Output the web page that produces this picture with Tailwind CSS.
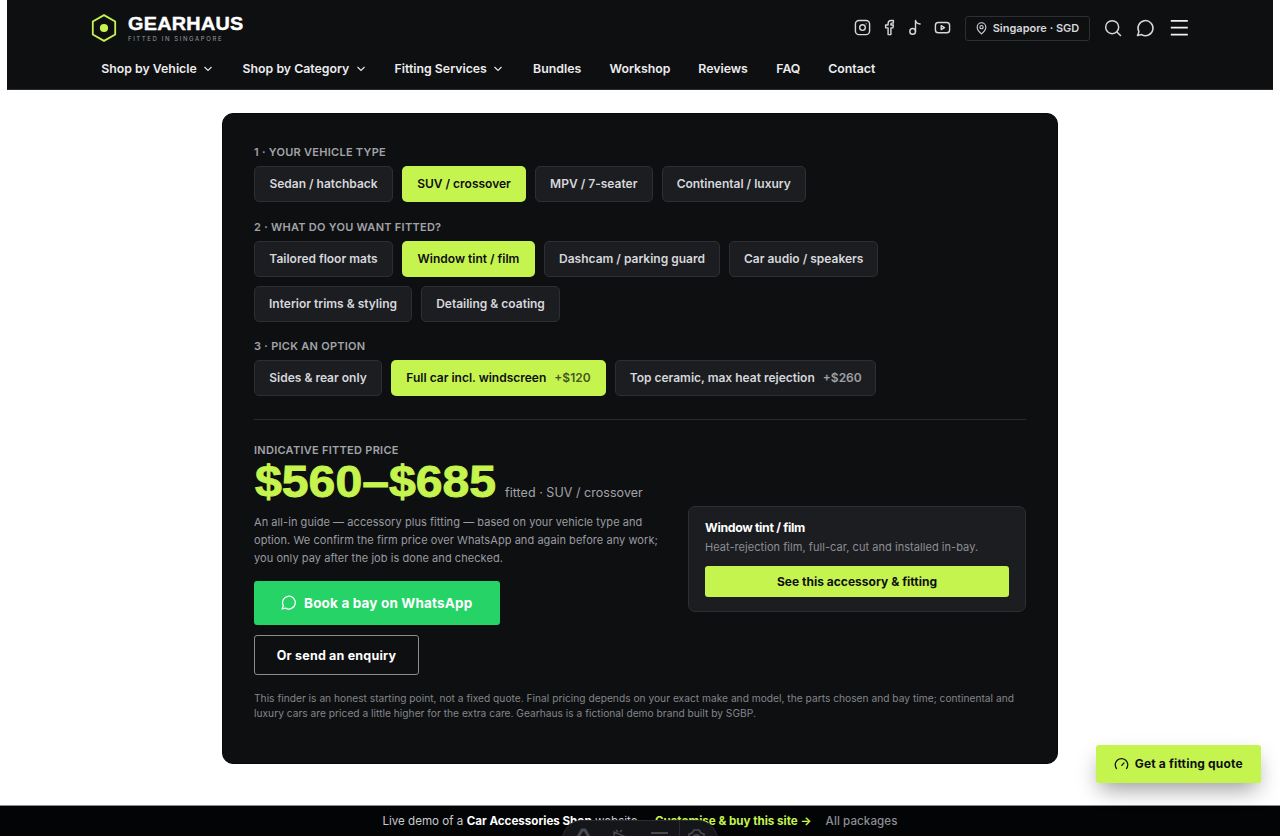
<!DOCTYPE html>
<html lang="en">

<head>
  <meta charset="utf-8" />
  <title>Gearhaus - Fitting price finder</title>
  <script src="https://cdn.jsdelivr.net/npm/@tailwindcss/browser@4"></script>
</head>

<body class="relative h-[836px] overflow-hidden bg-white font-['Inter',sans-serif] text-[12px] text-[#d6d7db]">
  <header class="mx-[7px] h-[90px] border-b border-[#2a2b30] bg-[#0e0f11]">
    <div class="flex h-[56px] items-center justify-between pl-[84px] pr-[83px]">
      <a class="flex items-center gap-[11px]">
        <svg class="h-[29px] w-[26px]" viewBox="0 0 26 29" fill="none">
          <path d="M13 1.100 24.200 7.500v13L13 26.900 1.800 20.500V7.500Z" stroke="#c6f44e" stroke-width="1.800" />
          <circle cx="13" cy="14" r="4.100" fill="#c6f44e" />
        </svg>
        <span class="flex flex-col pt-[1px]">
          <span class="origin-left scale-x-110 font-['Liberation_Sans',sans-serif] text-[18px] leading-[20px] font-bold tracking-[0.250px] text-white [-webkit-text-stroke:0.4px_white]">GEARHAUS</span>
          <span class="mt-[1px] text-[6px] leading-[8px] tracking-[1.600px] text-[#9a9ba1]">FITTED IN SINGAPORE</span>
        </span>
      </a>
      <div class="flex items-center">
        <div class="flex items-center gap-[9.700px] pb-[1px] text-[#d6d7db]">
          <svg class="size-[17px]" viewBox="0 0 24 24" fill="none" stroke="currentColor" stroke-width="2"><rect x="2" y="2" width="20" height="20" rx="5" /><circle cx="12" cy="12" r="4" /><circle cx="17.2" cy="6.8" r=".8" fill="currentColor" stroke="none" /></svg>
          <svg class="size-[17px]" viewBox="0 0 24 24" fill="none" stroke="currentColor" stroke-width="2" stroke-linejoin="round"><path d="M14 8.5V7c0-.8.5-1.2 1.3-1.2H17.500V2h-3.200C11.700 2 10 4 10 6.500v2H6.500v4H10V22h4v-9.500h2.800l.7-4Z" /></svg>
          <svg class="size-[17px]" viewBox="0 0 24 24" fill="none" stroke="currentColor" stroke-width="2" stroke-linecap="round" stroke-linejoin="round"><circle cx="8" cy="17.500" r="4" /><path d="M12 17.500V2c.6 3 2.800 4.800 6.500 5" /></svg>
          <svg class="size-[17px]" viewBox="0 0 24 24" fill="none" stroke="currentColor" stroke-width="2" stroke-linejoin="round"><rect x="2" y="5" width="20" height="14.500" rx="4" /><path d="m10.200 9.500 4.600 2.700-4.600 2.700Z" /></svg>
        </div>
        <div class="ml-[13.500px] flex h-[25px] w-[125px] items-center justify-center gap-[5px] rounded-[3px] border border-[#2e2f34]">
          <svg class="size-[13px]" viewBox="0 0 24 24" fill="none" stroke="currentColor" stroke-width="2"><path d="M12 22s8-7 8-12.500a8 8 0 0 0-16 0C4 15 12 22 12 22Z" /><circle cx="12" cy="9.500" r="3" /></svg>
          <span class="text-[11px] font-semibold">Singapore · SGD</span>
        </div>
        <svg class="ml-[13px] size-[20px]" viewBox="0 0 24 24" fill="none" stroke="currentColor" stroke-width="1.8" stroke-linecap="round"><circle cx="11" cy="11" r="7.800" /><path d="m21 21-4.300-4.300" /></svg>
        <svg class="ml-[12px] size-[20px]" viewBox="0 0 24 24" fill="none" stroke="currentColor" stroke-width="1.8" stroke-linejoin="round"><path d="M3 21l1.700-4.500A9 9 0 1 1 8 19.900Z" /></svg>
        <svg class="ml-[13.500px] h-[20px] w-[22px]" viewBox="0 0 22 20" fill="none" stroke="#f1f1f3" stroke-width="1.700"><path d="M2.800 2.800h17M2.800 9.700h17M2.800 16.600h17" /></svg>
      </div>
    </div>
    <nav class="flex items-center pt-[5px] pl-[94.300px] text-[12.300px] leading-[16px] font-semibold text-[#ececee]">
      <a class="flex w-[141.300px] items-center gap-[5.500px]"><span>Shop by Vehicle</span><svg class="size-[12px]" viewBox="0 0 24 24" fill="none" stroke="currentColor" stroke-width="2.200"><path d="m5 8 7 7 7-7" /></svg></a>
      <a class="flex w-[152px] items-center gap-[5.500px]"><span>Shop by Category</span><svg class="size-[12px]" viewBox="0 0 24 24" fill="none" stroke="currentColor" stroke-width="2.200"><path d="m5 8 7 7 7-7" /></svg></a>
      <a class="flex w-[138.500px] items-center gap-[5.500px]"><span>Fitting Services</span><svg class="size-[12px]" viewBox="0 0 24 24" fill="none" stroke="currentColor" stroke-width="2.200"><path d="m5 8 7 7 7-7" /></svg></a>
      <a class="w-[76.500px]">Bundles</a>
      <a class="w-[88.700px]">Workshop</a>
      <a class="w-[78px]">Reviews</a>
      <a class="w-[52px]">FAQ</a>
      <a>Contact</a>
    </nav>
  </header>

  <main class="mx-auto mt-[23px] h-[651px] w-[836px] rounded-[11px] border border-[#08090a] bg-[#0e0f11] px-[31px] pt-[30px]">
    <h3 class="text-[11px] leading-[16px] font-semibold tracking-[0.270px] text-[#a2a3a9]">1 · YOUR VEHICLE TYPE</h3>
    <div class="mt-[6px] flex gap-[9px] font-semibold">
      <button class="h-[36px] w-[139px] rounded-[5px] border border-[#2e2f34] bg-[#1c1d21]">Sedan / hatchback</button>
      <button class="h-[36px] w-[124px] rounded-[5px] bg-[#c6f44e] text-[#0e0f11]">SUV / crossover</button>
      <button class="h-[36px] w-[117.500px] rounded-[5px] border border-[#2e2f34] bg-[#1c1d21]">MPV / 7-seater</button>
      <button class="h-[36px] w-[144.500px] rounded-[5px] border border-[#2e2f34] bg-[#1c1d21]">Continental / luxury</button>
    </div>

    <h3 class="mt-[17px] text-[11px] leading-[16px] font-semibold tracking-[0.270px] text-[#a2a3a9]">2 · WHAT DO YOU WANT FITTED?</h3>
    <div class="mt-[6px] flex flex-wrap gap-[9px] font-semibold">
      <button class="h-[36px] w-[139px] rounded-[5px] border border-[#2e2f34] bg-[#1c1d21]">Tailored floor mats</button>
      <button class="h-[36px] w-[133px] rounded-[5px] bg-[#c6f44e] text-[#0e0f11]">Window tint / film</button>
      <button class="h-[36px] w-[176px] rounded-[5px] border border-[#2e2f34] bg-[#1c1d21]">Dashcam / parking guard</button>
      <button class="h-[36px] w-[149.400px] rounded-[5px] border border-[#2e2f34] bg-[#1c1d21]">Car audio / speakers</button>
      <button class="h-[36px] w-[158px] rounded-[5px] border border-[#2e2f34] bg-[#1c1d21]">Interior trims &amp; styling</button>
      <button class="h-[36px] w-[139px] rounded-[5px] border border-[#2e2f34] bg-[#1c1d21]">Detailing &amp; coating</button>
    </div>

    <h3 class="mt-[16px] text-[11px] leading-[16px] font-semibold tracking-[0.270px] text-[#a2a3a9]">3 · PICK AN OPTION</h3>
    <div class="mt-[6px] flex gap-[9px] font-semibold">
      <button class="h-[36px] w-[128px] rounded-[5px] border border-[#2e2f34] bg-[#1c1d21]">Sides &amp; rear only</button>
      <button class="h-[36px] w-[215px] rounded-[5px] bg-[#c6f44e] text-[#0e0f11]">Full car incl. windscreen<span class="ml-[8px] opacity-70">+$120</span></button>
      <button class="h-[36px] w-[261.400px] rounded-[5px] border border-[#2e2f34] bg-[#1c1d21]">Top ceramic, max heat rejection<span class="ml-[8px] opacity-70">+$260</span></button>
    </div>

    <section class="mt-[23px] flex items-center justify-between border-t border-[#2a2b30] pt-[22px]">
      <div class="w-[408px]">
        <h3 class="text-[11px] leading-[16px] font-semibold tracking-[0.270px] text-[#a2a3a9]">INDICATIVE FITTED PRICE</h3>
        <div class="flex h-[48px] items-baseline whitespace-nowrap">
          <span class="ml-[1px] w-[241px] origin-left scale-x-110 font-['Liberation_Sans',sans-serif] text-[43.800px] leading-[47px] font-bold text-[#c6f44e] [-webkit-text-stroke:0.9px_#c6f44e]">$560–$685</span>
          <span class="ml-[9px] text-[12.500px] tracking-[0.040px] text-[#a2a3a9]">fitted · SUV / crossover</span>
        </div>
        <p class="mt-[7px] text-[11px] leading-[18px] tracking-[0.060px] whitespace-nowrap text-[#9a9ba1]">
          An all-in guide — accessory plus fitting — based on your vehicle type and<br />
          option. We confirm the firm price over WhatsApp and again before any work;<br />
          you only pay after the job is done and checked.
        </p>
        <button class="mt-[14px] flex h-[43.500px] w-[245.500px] items-center justify-center gap-[7px] rounded-[3px] bg-[#26d367] pr-[1px] text-[13.500px] font-bold tracking-[0.160px] text-white">
          <svg class="size-[17px]" viewBox="0 0 24 24" fill="none" stroke="currentColor" stroke-width="1.8" stroke-linejoin="round"><path d="M3 21l1.700-4.500A9 9 0 1 1 8 19.900Z" /></svg>
          <span>Book a bay on WhatsApp</span>
        </button>
        <button class="mt-[10.500px] h-[40px] w-[165px] rounded-[3px] border border-[#8b8c90] pt-[2px] text-[12.500px] font-bold tracking-[0.200px] text-white">Or send an enquiry</button>
      </div>
      <div class="mt-[1px] h-[106px] w-[338px] rounded-[7px] border border-[#2e2f34] bg-[#1c1d21] px-[16px] pt-[12px]">
        <h4 class="text-[12.300px] leading-[18px] font-bold tracking-[-0.330px] text-white">Window tint / film</h4>
        <p class="mt-[2px] text-[11px] leading-[16px] tracking-[0.050px] text-[#8d8e94]">Heat-rejection film, full-car, cut and installed in-bay.</p>
        <button class="mt-[11px] h-[31px] w-full rounded-[3px] bg-[#c6f44e] text-[12px] font-bold tracking-[0.020px] text-[#0e0f11]">See this accessory &amp; fitting</button>
      </div>
    </section>
    <p class="mt-[15.500px] text-[10.200px] leading-[15px] tracking-[0.015px] whitespace-nowrap text-[#84858b]">
      This finder is an honest starting point, not a fixed quote. Final pricing depends on your exact make and model, the parts chosen and bay time; continental and<br />
      luxury cars are priced a little higher for the extra care. Gearhaus is a fictional demo brand built by SGBP.
    </p>
  </main>

  <footer class="mt-[41px] flex h-[31px] items-center justify-center border-t border-[#8b8c90] bg-[#030406] pt-[2px] text-[11.600px] whitespace-nowrap text-[#c8c9cd]">
    <span>Live demo of a <b class="font-bold text-white">Car Accessories Shop</b> website</span>
    <a class="ml-[17.500px] font-bold text-[#c6f44e]">Customise &amp; buy this site →</a>
    <a class="ml-[14px] font-medium tracking-[0.080px] text-[#8d8e94]">All packages</a>
  </footer>

  <button class="absolute top-[745px] left-[1096px] flex h-[38px] w-[164.500px] items-center justify-center gap-[6px] rounded-[3px] bg-[#c6f44e] text-[12px] font-bold tracking-[0.180px] text-[#0e0f11] shadow-[0_10px_22px_-4px_rgba(0,0,0,0.4)]">
    <svg class="size-[15px]" viewBox="0 0 24 24" fill="none" stroke="currentColor" stroke-width="2" stroke-linecap="round"><path d="M4 18.500a10 10 0 1 1 16 0M12.500 13.500l3.500-4" /></svg>
    <span>Get a fitting quote</span>
  </button>

  <!-- floating toolbar, cut off by the bottom edge -->
  <div class="absolute top-[820px] left-[562px] flex h-[40px] w-[156px] rounded-[20px] border border-[#2a2b30] bg-[#15161a]">
    <svg class="h-[16px] w-full" viewBox="0 0 154 16" fill="none" stroke="#494a50" stroke-width="2">
      <path d="M15 16l4-7h3l4 7" stroke-width="3" />
      <path d="M51 16v-5l12 5M53 9l2 2M59 9l-2 2" stroke-width="1.500" />
      <path d="M88 12h17" />
      <path d="M116.500 0v16" stroke="#2a2b30" stroke-width="1" />
      <path d="M126 16v-3l3-1 2-3h5l2 3 3 1v3M130 16a4 4 0 0 1 7 0" stroke-width="1.700" />
    </svg>
  </div>
</body>

</html>
